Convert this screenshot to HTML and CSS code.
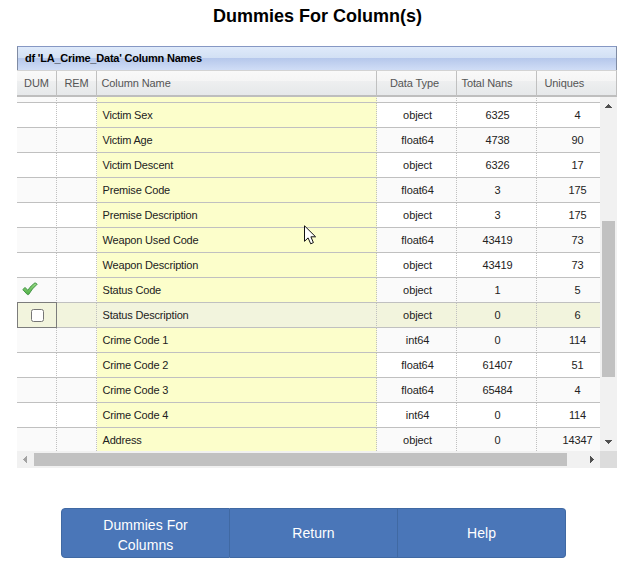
FILE: index.html
```html
<!DOCTYPE html>
<html lang="en">
<head>
<meta charset="utf-8">
<title>Dummies For Column(s)</title>
<link rel="stylesheet" href="styles.css">
</head>
<body>
<h1>Dummies For Column(s)</h1>
<section class="grid">
  <div class="caption">df 'LA_Crime_Data' Column Names</div>
  <div class="head row"><span>DUM</span><span>REM</span><span class="name">Column Name</span><span class="type">Data Type</span><span class="nans">Total Nans</span><span class="uniq">Uniques</span></div>
  <div class="view">
    <div class="rows">
      <div class="row"><span></span><span></span><span class="name"></span><span></span><span></span><span></span></div>
      <div class="row"><span></span><span></span><span class="name">Victim Sex</span><span>object</span><span>6325</span><span>4</span></div>
      <div class="row"><span></span><span></span><span class="name">Victim Age</span><span>float64</span><span>4738</span><span>90</span></div>
      <div class="row"><span></span><span></span><span class="name">Victim Descent</span><span>object</span><span>6326</span><span>17</span></div>
      <div class="row"><span></span><span></span><span class="name">Premise Code</span><span>float64</span><span>3</span><span>175</span></div>
      <div class="row"><span></span><span></span><span class="name">Premise Description</span><span>object</span><span>3</span><span>175</span></div>
      <div class="row"><span></span><span></span><span class="name">Weapon Used Code</span><span>float64</span><span>43419</span><span>73</span></div>
      <div class="row"><span></span><span></span><span class="name">Weapon Description</span><span>object</span><span>43419</span><span>73</span></div>
      <div class="row"><span class="checked"><svg width="16" height="14" viewBox="0 0 16 14"><defs><linearGradient id="g" x1="0" y1="0" x2="0" y2="1"><stop offset="0" stop-color="#9bdc86"/><stop offset="1" stop-color="#4fae45"/></linearGradient></defs><path d="M.8 7.6 3 5.5 5.8 8.2Q9 3.5 13 .8L15.2 2.2Q10 6.5 6.6 12.6L5.4 12.6Z" fill="url(#g)" stroke="#439446" stroke-width="1" stroke-linejoin="round"/></svg></span><span></span><span class="name">Status Code</span><span>object</span><span>1</span><span>5</span></div>
      <div class="row active"><span class="edit"><i class="box"></i></span><span></span><span class="name">Status Description</span><span>object</span><span>0</span><span>6</span></div>
      <div class="row"><span></span><span></span><span class="name">Crime Code 1</span><span>int64</span><span>0</span><span>114</span></div>
      <div class="row"><span></span><span></span><span class="name">Crime Code 2</span><span>float64</span><span>61407</span><span>51</span></div>
      <div class="row"><span></span><span></span><span class="name">Crime Code 3</span><span>float64</span><span>65484</span><span>4</span></div>
      <div class="row"><span></span><span></span><span class="name">Crime Code 4</span><span>int64</span><span>0</span><span>114</span></div>
      <div class="row"><span></span><span></span><span class="name">Address</span><span>object</span><span>0</span><span>14347</span></div>
    </div>
    <div class="vbar"><svg width="17" height="17"><path d="M5 11h7v-1h-1v-1h-1v-1h-1v-1h-1v1h-1v1h-1v1h-1z" fill="#505050"/></svg><i class="vthumb"></i><svg width="17" height="17"><path d="M5 6h7v1h-1v1h-1v1h-1v1h-1v-1h-1v-1h-1v-1h-1z" fill="#505050"/></svg></div>
  </div>
  <div class="hbar"><svg width="17" height="17"><path d="M10 5v7h-1v-1h-1v-1h-1v-1h-1v-1h1v-1h1v-1h1v-1z" fill="#a3a3a3"/></svg><i class="hthumb"></i><svg width="17" height="17"><path d="M7 5v7h1v-1h1v-1h1v-1h1v-1h-1v-1h-1v-1h-1v-1z" fill="#505050"/></svg><i class="corner"></i></div>
</section>
<nav class="buttons"><button>Dummies For Columns</button><button>Return</button><button>Help</button></nav>
<svg class="pointer" width="13" height="21" viewBox="0 0 13 21"><path d="M.5.8V16.3L4.1 12.9 6.7 18.8 9.4 17.6 6.9 11.8H11.6Z" fill="#fff" stroke="#111" stroke-width="1"/></svg>
</body>
</html>
```
FILE: styles.css
```css
* { box-sizing: border-box; }
body {
  margin: 0;
  width: 636px;
  height: 574px;
  overflow: hidden;
  background: #fff;
  color: #222;
  font: 11px "Liberation Sans", Arial, sans-serif;
}
h1 {
  margin: 0 1px 0 0;
  height: 46px;
  padding-top: 5px;
  font-size: 18px;
  line-height: 22px;
  text-align: center;
  color: #000;
}
.grid { width: 600px; margin-left: 17px; }
.caption {
  height: 24px;
  padding-left: 7px;
  border: 1px solid #7f8ba3;
  border-top-color: #8698c4;
  border-bottom: 0;
  background: linear-gradient(#dfeafa 0, #d2e0f4 11px, #b5c7eb 11px, #d0ddf6 100%);
  font-weight: bold;
  letter-spacing: -0.22px;
  line-height: 23px;
  color: #000;
}
.row {
  display: grid;
  grid-template-columns: 40px 40px 280px 80px 80px 80px;
  height: 25px;
}
.row span {
  border-right: 1px dotted silver;
  border-bottom: 1px solid silver;
  text-align: center;
  line-height: 24px;
  padding-left: 2px;
  letter-spacing: -0.1px;
}
.rows .row span:last-child { border-right: 0; padding-left: 1px; }
.row .name {
  text-align: left;
  padding-left: 5.5px;
  background: #fcfecb;
}
.rows .row .name { letter-spacing: -0.18px; }
.head.row {
  height: 27px;
  border-top: 1px solid #d3d3d3;
  border-bottom: 2px solid #bebebe;
  border-right: 1px solid silver;
  background: linear-gradient(#f9f9f9 0, #f5f5f5 10px, #eeeff0 10px, #e6e8ea 100%);
  color: #555;
}
.head.row span {
  border-right: 1px solid silver;
  border-bottom: 0;
  line-height: 25px;
  padding-left: 0;
  letter-spacing: -0.1px;
}
.head.row span:last-child { border-right: 0; }
.head.row .name { padding-left: 4.5px; background: none; }
.head.row .type { padding-right: 4px; }
.head.row .nans { text-align: left; padding-left: 4.5px; }
.head.row .uniq { text-align: left; padding-left: 7.5px; }
.view { display: flex; height: 354px; overflow: hidden; }
.rows { width: 583px; margin-top: -19px; overflow: hidden; }
.rows .row { width: 600px; background: #fff; }
.rows .row:nth-child(odd) { background: #fafafa; }
.rows .row.active, .rows .row.active .name { background: #f2f4dd; }
.row span.checked { text-align: left; padding: 4px 0 0 5px; line-height: 0; }
.row span.edit {
  margin-top: -1px;
  padding-left: 1px;
  border: 1px solid #7c7c7c;
  display: flex;
  align-items: center;
  justify-content: center;
}
.box {
  width: 13px;
  height: 13px;
  border: 1px solid #767676;
  border-radius: 2.5px;
  background: #fff;
}
.vbar { width: 17px; background: #f1f1f1; }
.vbar svg, .hbar svg { display: block; flex: none; }
.vthumb {
  display: block;
  width: 13px;
  height: 156px;
  margin: 107px 2px 57px;
  background: #c1c1c1;
}
.hbar { display: flex; height: 17px; background: #f1f1f1; }
.hthumb { width: 533px; height: 13px; margin: 2px 16px 0 0; background: #c1c1c1; }
.corner { width: 17px; background: #dcdcdc; }
.buttons {
  display: grid;
  grid-template-columns: 169px 168px 168px;
  width: 505px;
  height: 50px;
  margin: 40px 0 0 61px;
}
.buttons button {
  padding: 0 30px;
  border: solid #4069a3;
  border-width: 1px 1px 1px 0;
  background: #4a76b8;
  color: #fff;
  font: 14px/20px "Liberation Sans", Arial, sans-serif;
  letter-spacing: 0.05px;
}
.buttons button:first-child {
  padding-top: 3px;
  border-left-width: 1px;
  border-radius: 4px 0 0 4px;
}
.buttons button:last-child { border-radius: 0 4px 4px 0; }
.pointer { position: absolute; left: 304px; top: 225px; }
```
